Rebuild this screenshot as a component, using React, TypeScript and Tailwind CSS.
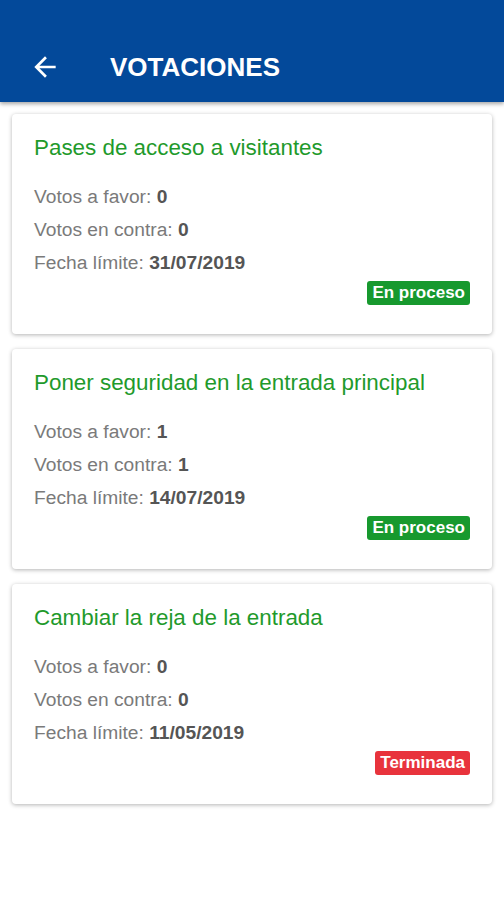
const items = [
  { title: 'Pases de acceso a visitantes', favor: 0, contra: 0, fecha: '31/07/2019', done: false },
  { title: 'Poner seguridad en la entrada principal', favor: 1, contra: 1, fecha: '14/07/2019', done: false },
  { title: 'Cambiar la reja de la entrada', favor: 0, contra: 0, fecha: '11/05/2019', done: true },
]

function Row({ label, value }: { label: string; value: string | number }) {
  return (
    <div className="h-[33px] leading-[33px] text-[19.2px] text-[#7a7a7a]">
      {label}: <span className="font-bold text-[#555555]">{value}</span>
    </div>
  )
}

export default function App() {
  return (
    <div className="min-h-[900px] bg-white" style={{ fontFamily: '"Liberation Sans", Arial, sans-serif' }}>
      <header className="relative z-10 flex h-[102px] items-end bg-[#03499a] pb-[20px] shadow-[0_2px_4px_rgba(0,0,0,0.35)]">
        <div className="flex h-[30px] items-center">
          <svg viewBox="0 0 24 24" className="ml-[29px] h-[32px] w-[32px] fill-white">
            <path d="M20 11H7.83l5.59-5.59L12 4l-8 8 8 8 1.41-1.41L7.83 13H20v-2z" />
          </svg>
          <h1 className="ml-[49px] text-[26px] font-bold leading-[30px] text-white">VOTACIONES</h1>
        </div>
      </header>
      <main className="flex flex-col gap-[15px] px-[12px] pt-[12px]">
        {items.map((it) => (
          <div
            key={it.title}
            className="h-[220px] rounded-[4px] bg-white px-[22px] pt-[22px] shadow-[0_1px_4px_rgba(0,0,0,0.3)]"
          >
            <div className="text-[22.4px] leading-[24px] text-[#1f9a2c]">{it.title}</div>
            <div className="mt-[20px]">
              <Row label="Votos a favor" value={it.favor} />
              <Row label="Votos en contra" value={it.contra} />
              <Row label="Fecha límite" value={it.fecha} />
            </div>
            <div className="mt-[2px] flex justify-end">
              <span
                className={`rounded-[3px] px-[5px] text-[17px] font-bold leading-[24px] text-white ${
                  it.done ? 'bg-[#e8333c]' : 'bg-[#17992e]'
                }`}
              >
                {it.done ? 'Terminada' : 'En proceso'}
              </span>
            </div>
          </div>
        ))}
      </main>
    </div>
  )
}
